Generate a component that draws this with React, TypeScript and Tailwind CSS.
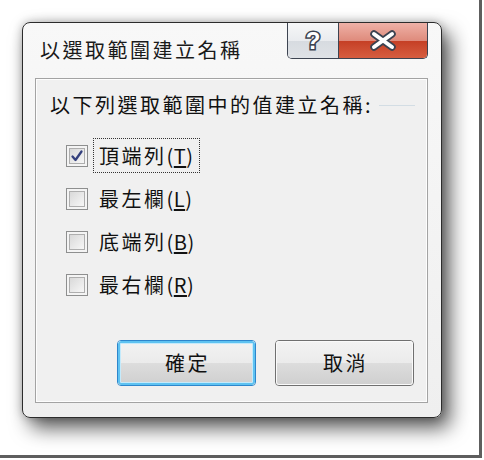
import React from 'react';

const FONT = {
  fontFamily: '"Noto Sans CJK TC", "Noto Sans CJK SC", "Noto Sans", sans-serif',
};

const Checkbox = ({ checked }: { checked?: boolean }) => {
  return (
    <div className="w-[22px] h-[22px] shrink-0 border border-[#8e8f8f] bg-[#f4f4f4] p-[2px]">
      <div className="w-full h-full border border-[#aeaeae] bg-gradient-to-br from-[#d9d9d9] to-[#f7f7f7] flex items-center justify-center">
        {checked && (
          <svg width="14" height="14" viewBox="0 0 14 14">
            <path
              d="M2.5 7.5 L5.5 11 L11.5 2.5"
              fill="none"
              stroke="#34407d"
              strokeWidth="2.3"
              strokeLinecap="round"
              strokeLinejoin="round"
            />
          </svg>
        )}
      </div>
    </div>
  );
};

const CheckRow = ({
  label,
  hotkey,
  checked,
  focused,
}: {
  label: string;
  hotkey: string;
  checked?: boolean;
  focused?: boolean;
}) => {
  return (
    <div className="h-[43px] flex items-center">
      <Checkbox checked={checked} />
      <span
        className={
          'ml-[5px] h-[35px] px-[5px] flex items-center border border-dotted ' +
          (focused ? 'border-[#333]' : 'border-transparent')
        }
      >
        <span className="text-[20px] leading-none text-[#111]">
          <span className="tracking-[2.5px]">{label}</span>
          <span className="tracking-[0.5px]">
            (<span className="underline underline-offset-2">{hotkey}</span>)
          </span>
        </span>
      </span>
    </div>
  );
};

const DialogButton = ({
  children,
  primary,
}: {
  children: React.ReactNode;
  primary?: boolean;
}) => {
  return (
    <button
      className={
        'w-[139px] h-[46px] rounded-[4px] border flex flex-col overflow-hidden relative ' +
        (primary ? 'border-[#2d86cc]' : 'border-[#707070]')
      }
    >
      <div className="flex-1 w-full bg-gradient-to-b from-[#f3f3f3] to-[#ebebeb]" />
      <div className="flex-1 w-full bg-gradient-to-b from-[#dddddd] to-[#cfcfcf]" />
      <span
        className={
          'absolute inset-0 rounded-[3px] ' +
          (primary
            ? 'border-2 border-[#5ec2f1] shadow-[inset_0_0_0_1px_#c4eafb]'
            : 'border border-[#fafafa]')
        }
      />
      <span className="absolute inset-0 flex items-center justify-center text-[20px] tracking-[2.5px] text-[#111] pl-[2px]">
        {children}
      </span>
    </button>
  );
};

export default function App() {
  return (
    <div className="w-[484px] h-[460px] bg-white overflow-hidden" style={FONT}>
      <div className="w-[482px] h-[458px] border-r-[3px] border-b-[3px] border-[#5e5e5e] pt-[22px] pl-[22px]">
        <div className="w-[420px] h-[396px] rounded-[8px] border border-[#2c2c2c] bg-gradient-to-b from-[#f8f8f8] to-[#efefef] shadow-[8px_10px_20px_rgba(0,0,0,0.65),0_0_10px_rgba(0,0,0,0.25)] flex flex-col">
          {/* title bar */}
          <div className="h-[55px] flex items-start pl-[17px] pr-[13px]">
            <span className="mt-[13px] text-[20px] leading-[28px] tracking-[2.5px] text-[#1a1a1a]">
              以選取範圍建立名稱
            </span>
            <div className="ml-auto flex h-[36px]">
              <div className="w-[52px] h-full border border-t-0 border-[#3d4451] rounded-bl-[5px] flex flex-col overflow-hidden relative">
                <div className="flex-1 bg-gradient-to-b from-[#f6f7f8] to-[#e9ebee]" />
                <div className="flex-1 bg-gradient-to-b from-[#d7dbe0] to-[#dfe2e6]" />
                <svg className="absolute inset-0" width="50" height="35" viewBox="0 0 50 35">
                  <text
                    x="25"
                    y="26"
                    textAnchor="middle"
                    fontSize="24"
                    fontWeight="bold"
                    fontFamily="'Liberation Sans', sans-serif"
                    fill="#ffffff"
                    stroke="#3b4250"
                    strokeWidth="3.2"
                    paintOrder="stroke"
                  >
                    ?
                  </text>
                </svg>
              </div>
              <div className="w-[89px] h-full border border-t-0 border-l-0 border-[#3d4451] rounded-br-[5px] flex flex-col overflow-hidden relative">
                <div className="flex-1 bg-gradient-to-b from-[#eeb1a7] to-[#de8a7b]" />
                <div className="flex-1 bg-gradient-to-b from-[#c53f25] to-[#d65d40]" />
                <svg className="absolute inset-0" width="88" height="35" viewBox="0 0 88 35">
                  <path
                    d="M35 11 L53 24 M53 11 L35 24"
                    stroke="#3b4250"
                    strokeWidth="7.5"
                    strokeLinecap="round"
                  />
                  <path
                    d="M35 11 L53 24 M53 11 L35 24"
                    stroke="#ffffff"
                    strokeWidth="4"
                    strokeLinecap="round"
                  />
                </svg>
              </div>
            </div>
          </div>

          {/* content panel */}
          <div className="ml-[12px] mr-[13px] h-[325px] border border-[#a3a3a3] bg-[#f0f0f0] shadow-[inset_0_0_0_1px_#fdfdfd]">
            <div className="mt-[12px] pl-[14px] flex items-center">
              <span className="text-[20px] leading-[28px] tracking-[2.5px] text-[#111]">
                以下列選取範圍中的值建立名稱:
              </span>
              <div className="ml-[6px] w-[36px] h-px bg-[#d3dde4]" />
            </div>

            <div className="mt-[15px] pl-[30px] flex flex-col">
              <CheckRow label="頂端列" hotkey="T" checked focused />
              <CheckRow label="最左欄" hotkey="L" />
              <CheckRow label="底端列" hotkey="B" />
              <CheckRow label="最右欄" hotkey="R" />
            </div>

            <div className="mt-[34px] pl-[81px] flex gap-[19px]">
              <DialogButton primary>確定</DialogButton>
              <DialogButton>取消</DialogButton>
            </div>
          </div>
        </div>
      </div>
    </div>
  );
}
